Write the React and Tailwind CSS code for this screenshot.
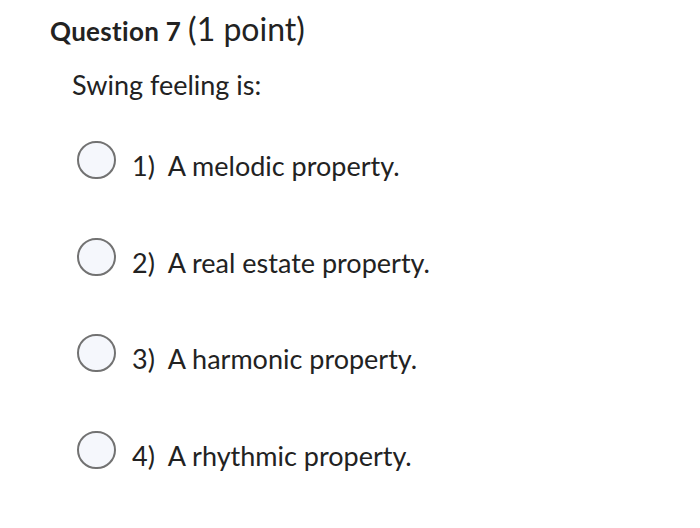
import React from "react";

const options = [
  "1)\u00a0 A melodic property.",
  "2)\u00a0 A real estate property.",
  "3)\u00a0 A harmonic property.",
  "4)\u00a0 A rhythmic property.",
];

export default function App() {
  return (
    <div
      className="w-[700px] h-[528px] bg-white overflow-hidden [font-variant-ligatures:none]"
      style={{ fontFamily: "Lato, 'Noto Sans', sans-serif" }}
    >
      <div className="pl-[50px] pt-[11px] flex items-baseline leading-[36px] text-[#222]">
        <span className="text-[26px] font-bold tracking-[0.3px]">Question 7</span>
        <span className="text-[32px] ml-[7px]">(1 point)</span>
      </div>
      <div className="pl-[72px] mt-[20px] text-[27px] leading-[32px] text-[#222]">Swing feeling is:</div>
      <div className="mt-[40px] flex flex-col gap-[58.67px] pl-[77px]">
        {options.map((o) => (
          <div key={o} className="flex items-start h-[38px]">
            <div className="w-[39px] h-[38px] rounded-full border-2 border-[#727272] bg-[#f5f7fc] shrink-0" />
            <span className="ml-[16px] mt-[9px] text-[27px] leading-[32px] text-[#222] whitespace-pre">{o}</span>
          </div>
        ))}
      </div>
    </div>
  );
}
